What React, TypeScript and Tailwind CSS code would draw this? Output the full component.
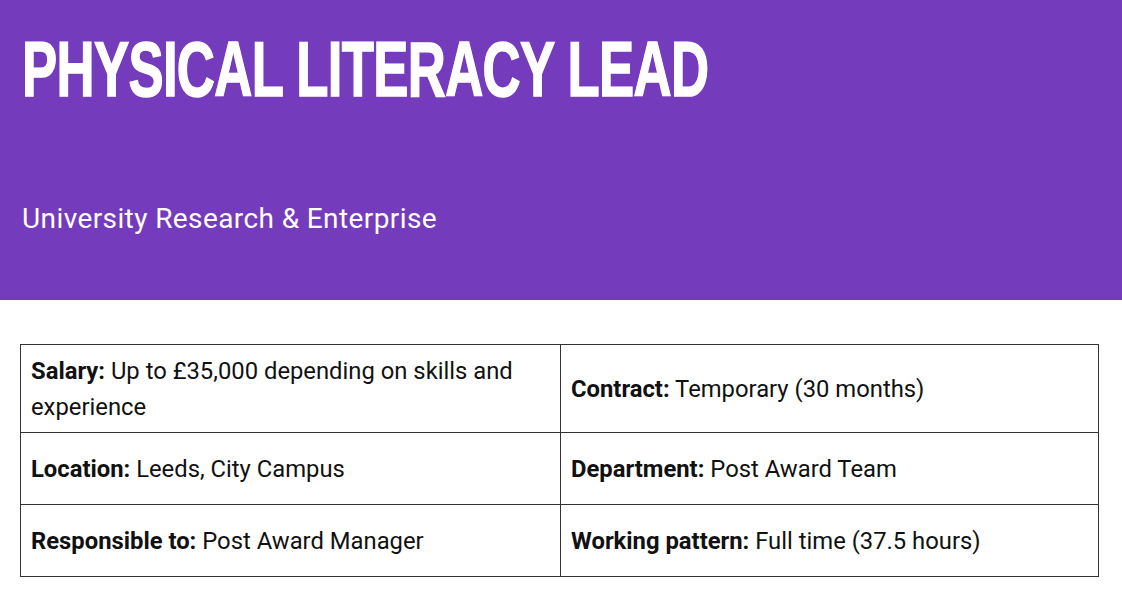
const rows: [string, string, string, string][] = [
  ['Salary:', 'Up to £35,000 depending on skills and experience', 'Contract:', 'Temporary (30 months)'],
  ['Location:', 'Leeds, City Campus', 'Department:', 'Post Award Team'],
  ['Responsible to:', 'Post Award Manager', 'Working pattern:', 'Full time (37.5 hours)'],
];

export default function App() {
  return (
    <div className="min-h-screen bg-white font-['Roboto',sans-serif] text-[#111]">
      {/* Header band */}
      <div className="h-[300px] bg-[#743bbc] px-[22px] pt-[29px] text-white">
        <h1 className="origin-left scale-x-[0.685] whitespace-nowrap font-['Liberation_Sans_Narrow','Liberation_Sans',sans-serif] text-[77px] font-bold leading-[80px] tracking-[-1px] [-webkit-text-stroke:1.5px_white]">
          PHYSICAL LITERACY LEAD
        </h1>
        <p className="mt-[92px] text-[28px] leading-[36px] tracking-[0.4px]">University Research &amp; Enterprise</p>
      </div>

      {/* Details table */}
      <div className="px-5 pt-[44px]">
        <table className="w-[1079px] border-collapse text-[23.8px] leading-[36px]">
          <tbody>
            {rows.map((r, i) => (
              <tr key={i} className={i === 0 ? 'h-[88px]' : 'h-[72px]'}>
                <td className="w-[540px] border border-[#333] px-[10px] align-middle">
                  <b className="font-bold">{r[0]}</b> {r[1]}
                </td>
                <td className="border border-[#333] px-[10px] align-middle">
                  <b className="font-bold">{r[2]}</b> {r[3]}
                </td>
              </tr>
            ))}
          </tbody>
        </table>
      </div>
    </div>
  );
}
